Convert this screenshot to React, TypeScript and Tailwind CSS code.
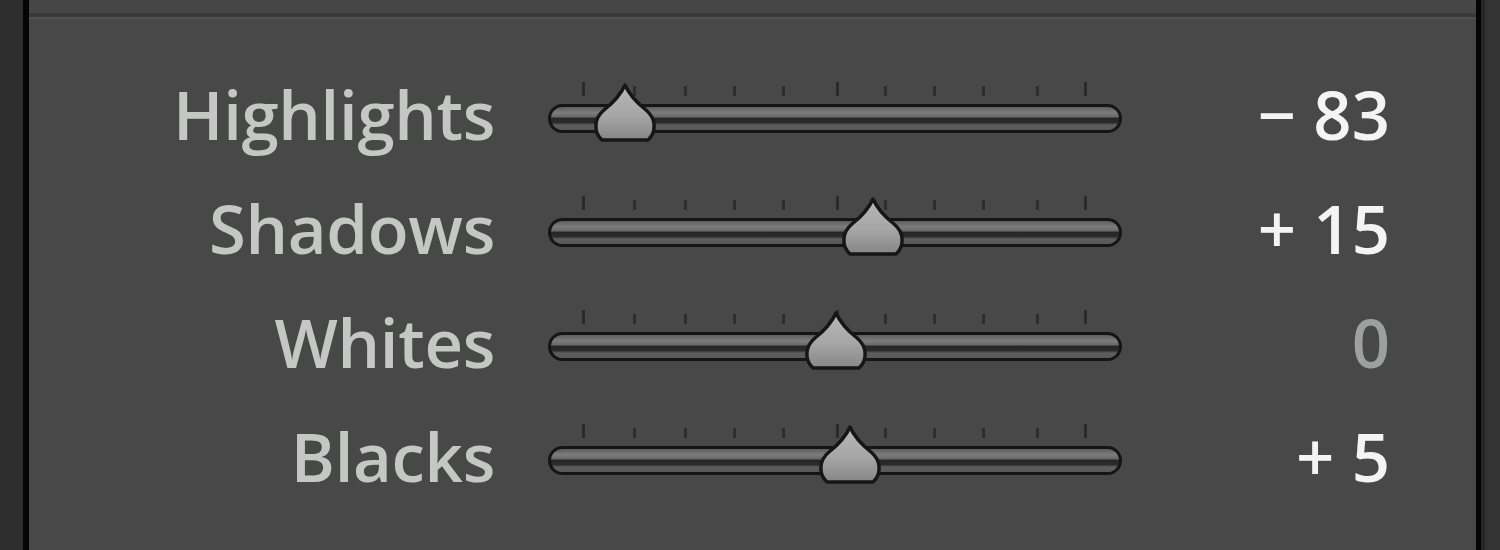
import React from "react";

interface SliderRowProps {
  label: string;
  value: string;
  pos: number; // thumb centre, px from track left
  dim?: boolean;
}

const ticks = [35, 86, 137, 186, 235, 289, 337, 386, 435, 489, 537];
const tallTicks = [0, 5, 10];

function Thumb() {
  return (
    <svg width="68" height="62" viewBox="0 0 68 62" className="block">
      <defs>
        <linearGradient id="thumbFill" x1="0" y1="0" x2="0" y2="1">
          <stop offset="0" stopColor="#b8b8b8" />
          <stop offset="0.55" stopColor="#a6a6a6" />
          <stop offset="1" stopColor="#868686" />
        </linearGradient>
      </defs>
      <path
        d="M34 3 C38 12 45 20 55 28 C66 37 65 51 57 58 L11 58 C3 51 2 37 13 28 C23 20 30 12 34 3 Z"
        fill="url(#thumbFill)"
        stroke="#161616"
        strokeWidth="3.5"
        strokeLinejoin="round"
      />
    </svg>
  );
}

function SliderRow(props: SliderRowProps) {
  return (
    <div className="flex h-[114px] items-center">
      <div className="w-[466px] text-right text-[67px] font-semibold leading-none tracking-[-0.3px] text-[#c4c7c3]">
        {props.label}
      </div>
      <div className="relative ml-[53px] mt-[2px] h-[62px] w-[574px]">
        {ticks.map((x, i) => (
          <div
            key={x}
            className={
              tallTicks.includes(i)
                ? "absolute top-[-2px] h-[14px] w-[3px] bg-[#2b2b2b]"
                : "absolute top-[2px] h-[10px] w-[3px] bg-[#2e2e2e]"
            }
            style={{ left: x - 1 }}
          />
        ))}
        <div className="absolute left-0 right-0 top-[20px] h-[29px] rounded-full border-[3px] border-[#151515] bg-[linear-gradient(to_bottom,#5e5e5e_0%,#7c7c7c_25%,#6a6a6a_42%,#262626_50%,#2c2c2c_68%,#5e5e5e_78%,#585858_100%)]" />
        <div className="absolute top-[-2px]" style={{ left: props.pos - 34 }}>
          <Thumb />
        </div>
      </div>
      <div
        className={
          props.dim
            ? "w-[268px] text-right text-[67px] font-semibold leading-none text-[#9ea0a0]"
            : "w-[268px] text-right text-[67px] font-semibold leading-none text-[#f4f4f4]"
        }
      >
        {props.value}
      </div>
    </div>
  );
}

export default function App() {
  return (
    <div className="flex h-[550px] w-[1500px] overflow-hidden bg-[#2e2e2e] font-['Open_Sans',sans-serif]">
      <div className="w-[23px] shrink-0 bg-[#2e2e2e]" />
      <div className="w-[6px] shrink-0 bg-[#050505]" />
      <div className="flex w-[1447px] shrink-0 flex-col bg-[#484848]">
        <div className="h-[13px] bg-[#464646]" />
        <div className="h-[4px] bg-[#3a3a3a]" />
        <div className="h-[2px] bg-[#4f4f4f]" />
        <div className="flex flex-col pt-[38px]">
          <SliderRow label="Highlights" value="− 83" pos={77} />
          <SliderRow label="Shadows" value="+ 15" pos={325} />
          <SliderRow label="Whites" value="0" pos={288} dim />
          <SliderRow label="Blacks" value="+ 5" pos={302} />
        </div>
      </div>
      <div className="w-[5px] shrink-0 bg-[#050505]" />
      <div className="w-[4px] shrink-0 bg-[#262626]" />
      <div className="flex-1 bg-[#333333]" />
    </div>
  );
}
